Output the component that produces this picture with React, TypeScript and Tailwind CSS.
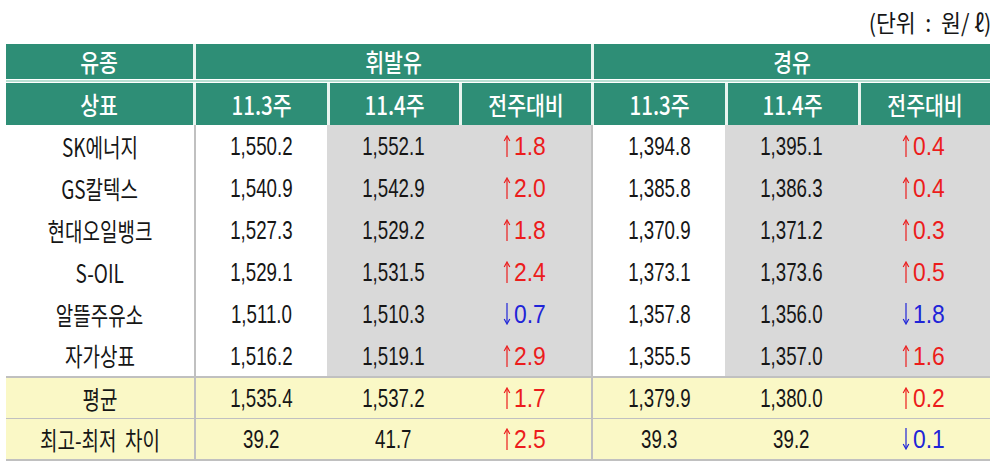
import React from "react";

type Chg = { dir: "up" | "down"; v: string };
type Row = [string, string, string, Chg, string, string, Chg];

const up = (v: string): Chg => ({ dir: "up", v });
const dn = (v: string): Chg => ({ dir: "down", v });

const rows: Row[] = [
  ["SK에너지", "1,550.2", "1,552.1", up("1.8"), "1,394.8", "1,395.1", up("0.4")],
  ["GS칼텍스", "1,540.9", "1,542.9", up("2.0"), "1,385.8", "1,386.3", up("0.4")],
  ["현대오일뱅크", "1,527.3", "1,529.2", up("1.8"), "1,370.9", "1,371.2", up("0.3")],
  ["S-OIL", "1,529.1", "1,531.5", up("2.4"), "1,373.1", "1,373.6", up("0.5")],
  ["알뜰주유소", "1,511.0", "1,510.3", dn("0.7"), "1,357.8", "1,356.0", dn("1.8")],
  ["자가상표", "1,516.2", "1,519.1", up("2.9"), "1,355.5", "1,357.0", up("1.6")],
];

const summary: Row[] = [
  ["평균", "1,535.4", "1,537.2", up("1.7"), "1,379.9", "1,380.0", up("0.2")],
  ["최고-최저  차이", "39.2", "41.7", up("2.5"), "39.3", "39.2", dn("0.1")],
];

const FONT = { fontFamily: "'Liberation Sans', 'Noto Sans CJK KR', sans-serif" };
const KFONT = { fontFamily: "'Noto Sans CJK KR', 'Liberation Sans', sans-serif" };

function T({ children }: { children: React.ReactNode }) {
  return (
    <span className="inline-block scale-x-[0.72] whitespace-pre text-[26px] leading-none text-[#161616]">
      {children}
    </span>
  );
}

function Arrow({ dir, color }: { dir: "up" | "down"; color: string }) {
  return (
    <svg width="8" height="22" viewBox="0 0 8 22" className="mr-[3px]">
      {dir === "up" ? (
        <>
          <line x1="4" y1="2" x2="4" y2="22" stroke={color} strokeWidth="1.2" />
          <path d="M1.2 6 L4 1 L6.8 6" fill="none" stroke={color} strokeWidth="1.2" />
        </>
      ) : (
        <>
          <line x1="4" y1="0" x2="4" y2="20" stroke={color} strokeWidth="1.2" />
          <path d="M1.2 16 L4 21 L6.8 16" fill="none" stroke={color} strokeWidth="1.2" />
        </>
      )}
    </svg>
  );
}

function Change({ c }: { c: Chg }) {
  const color = c.dir === "up" ? "#ec1c1c" : "#1f24d8";
  return (
    <span className="flex items-center">
      <Arrow dir={c.dir} color={color} />
      <span
        className={`inline-block scale-x-[0.88] origin-left text-[26px] leading-none ${
          c.dir === "up" ? "text-[#ec1c1c]" : "text-[#1f24d8]"
        }`}
      >
        {c.v}
      </span>
    </span>
  );
}

function HCell({ w, children }: { w: string; children: React.ReactNode }) {
  return (
    <div className={`${w} flex h-full items-center justify-center bg-[#2e8e76]`}>
      <span
        className="inline-block scale-x-[0.82] whitespace-nowrap text-[25px] font-medium leading-none text-white"
        style={KFONT}
      >
        {children}
      </span>
    </div>
  );
}

function VGap() {
  return <div className="h-full w-[3px] bg-[#e8f4ef]" />;
}

function BodyRow({ r, h, summaryRow }: { r: Row; h: string; summaryRow?: boolean }) {
  const white = summaryRow ? "bg-[#faf8c6]" : "bg-white";
  const gray = summaryRow ? "bg-[#faf8c6]" : "bg-[#d9d9d9]";
  return (
    <div className={`flex ${h}`}>
      <div className={`flex w-[188px] items-center justify-center ${white}`}>
        <span style={KFONT} className="inline-block scale-x-[0.76] whitespace-pre text-[25px] leading-none text-[#161616]">
          {r[0]}
        </span>
      </div>
      <div className="w-[2px] bg-[#c0c0c0]" />
      <div className={`flex w-[131px] items-center justify-center ${white}`}>
        <T>{r[1]}</T>
      </div>
      <div className={`flex w-[132px] items-center justify-center ${gray}`}>
        <T>{r[2]}</T>
      </div>
      <div className={`flex w-[132px] items-center justify-center pl-[4px] ${gray}`}>
        <Change c={r[3]} />
      </div>
      <div className="w-[2px] bg-[#c0c0c0]" />
      <div className={`flex w-[132px] items-center justify-center ${white}`}>
        <T>{r[4]}</T>
      </div>
      <div className={`flex w-[133px] items-center justify-center ${gray}`}>
        <T>{r[5]}</T>
      </div>
      <div className={`flex w-[132px] items-center justify-center pl-[4px] ${gray}`}>
        <Change c={r[6]} />
      </div>
    </div>
  );
}

export default function App() {
  return (
    <div className="h-[466px] w-[1000px] overflow-hidden bg-white" style={FONT}>
      <div className="flex h-[44px] items-start justify-end pr-[9px] pt-[10px]">
        <span
          className="inline-block origin-right scale-x-[0.9] whitespace-pre text-[24px] leading-none text-[#161616]"
          style={KFONT}
        >
          (단위  :  원/ ℓ)
        </span>
      </div>
      <div className="ml-[6px] w-[984px]">
        <div className="flex h-[35px]">
          <HCell w="w-[187px]">유종</HCell>
          <VGap />
          <HCell w="w-[395px]">휘발유</HCell>
          <VGap />
          <HCell w="w-[396px]">경유</HCell>
        </div>
        <div className="h-[4px] border-y border-white bg-[#b7dfd1]" />
        <div className="flex h-[42px]">
          <HCell w="w-[187px]">상표</HCell>
          <VGap />
          <HCell w="w-[131px]">11.3주</HCell>
          <VGap />
          <HCell w="w-[129px]">11.4주</HCell>
          <VGap />
          <HCell w="w-[129px]">전주대비</HCell>
          <VGap />
          <HCell w="w-[131px]">11.3주</HCell>
          <VGap />
          <HCell w="w-[130px]">11.4주</HCell>
          <VGap />
          <HCell w="w-[129px]">전주대비</HCell>
        </div>
        {rows.map((r, i) => (
          <BodyRow key={i} r={r} h={i === 5 ? "h-[41px]" : "h-[42px]"} />
        ))}
        <div className="h-[2px] bg-[#c0c0c0]" />
        <BodyRow r={summary[0]} h="h-[40px]" summaryRow />
        <div className="h-[1px] bg-[#c0c0c0]" />
        <BodyRow r={summary[1]} h="h-[40px]" summaryRow />
        <div className="h-[2px] bg-[#c0c0c0]" />
      </div>
    </div>
  );
}
